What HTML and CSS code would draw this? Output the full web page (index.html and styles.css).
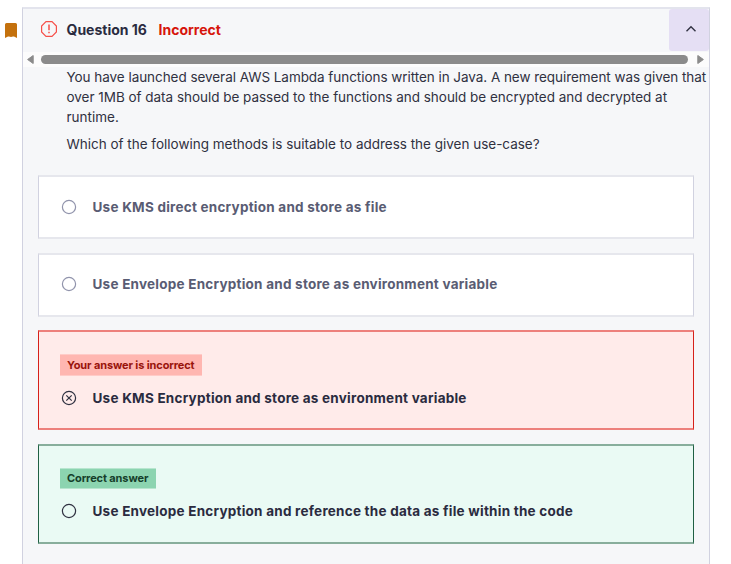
FILE: index.html
```html
<!DOCTYPE html>
<html lang="en">
<head>
<meta charset="utf-8">
<title>Question 16</title>
<link rel="stylesheet" href="styles.css">
</head>
<body>
<main class="page">
  <svg class="bookmark" width="12" height="15" viewBox="0 0 12 15"><path d="M1.5 0h9Q12 0 12 1.5V15L9 13.6H8L6 14 4 13.6H3L0 15V1.5Q0 0 1.5 0Z" fill="#c4710d"/></svg>
  <section class="panel">
    <header class="header">
      <svg class="alert" width="16" height="16" viewBox="0 0 16 16" fill="none" stroke="#f6504a" stroke-width="1.2"><path d="M5 .6h6L15.4 5v6L11 15.4H5L.6 11V5Z"/><path d="M8 3.5v5.8M8 10.8v1.5" stroke-width="1.5"/></svg>
      <h1 class="title">Question 16</h1>
      <span class="status">Incorrect</span>
      <button class="toggle" aria-label="Collapse"><svg width="12" height="8" viewBox="0 0 12 8" fill="none" stroke="#303141" stroke-width="1.4"><path d="M1.5 6.3 6 1.8l4.5 4.5"/></svg></button>
    </header>
    <div class="scrollbar">
      <svg width="7" height="9" viewBox="0 0 7 9"><path d="M6.2.5v8L.6 4.5Z" fill="#8b8b8b" stroke="#8b8b8b" stroke-linejoin="round"/></svg>
      <div class="thumb"></div>
      <svg width="7" height="9" viewBox="0 0 7 9"><path d="M.8.5v8l5.6-4Z" fill="#8b8b8b" stroke="#8b8b8b" stroke-linejoin="round"/></svg>
    </div>
    <div class="prompt">
      <p><span class="l1">You have launched several AWS Lambda functions written in Java. A new requirement was given that</span><br><span class="l2">over 1MB of data should be passed to the functions and should be encrypted and decrypted at</span><br>runtime.</p>
      <p><span class="l4">Which of the following methods is suitable to address the given use-case?</span></p>
    </div>
    <div class="answers">
      <div class="answer">
        <div class="choice"><svg class="radio" width="16" height="16" viewBox="0 0 16 16"><circle cx="8" cy="8" r="6.6"/></svg><span>Use KMS direct encryption and store as file</span></div>
      </div>
      <div class="answer second">
        <div class="choice"><svg class="radio" width="16" height="16" viewBox="0 0 16 16"><circle cx="8" cy="8" r="6.6"/></svg><span>Use Envelope Encryption and store as environment variable</span></div>
      </div>
      <div class="answer wrong">
        <div class="badge">Your answer is incorrect</div>
        <div class="choice"><svg class="radio" width="16" height="16" viewBox="0 0 16 16"><circle cx="8" cy="8" r="6.6"/><path d="m5.3 5.3 5.4 5.4m0-5.4-5.4 5.4"/></svg><span>Use KMS Encryption and store as environment variable</span></div>
      </div>
      <div class="answer right">
        <div class="badge">Correct answer</div>
        <div class="choice"><svg class="radio" width="16" height="16" viewBox="0 0 16 16"><circle cx="8" cy="8" r="6.6"/></svg><span>Use Envelope Encryption and reference the data as file within the code</span></div>
      </div>
    </div>
  </section>
</main>
</body>
</html>
```
FILE: styles.css
```css
* { box-sizing: border-box; }
body { margin: 0; background: #fff; color: #303141; font-family: Inter, "Liberation Sans", sans-serif; font-size: 13.5px; }
svg { display: block; flex: none; }
.page { display: flex; height: 564px; padding: 7px 0 0 5px; overflow: hidden; white-space: nowrap; }
.bookmark { margin-top: 16px; }
.panel { width: 688px; margin-left: 5px; background: #f6f7f9; border: 1px solid #d1d2e0; border-top: 2px solid #e3e4ed; border-bottom: 0; }
.header { display: flex; align-items: center; height: 43px; padding-left: 18px; }
.alert { margin-bottom: 3px; }
.title { margin: 0 0 2px 9.5px; width: 92px; font-size: 14px; line-height: 20px; font-weight: 700; color: #2a2b3f; }
.status { margin-bottom: 2px; font-weight: 700; font-size: 14px; line-height: 20px; color: #d6150c; }
.toggle { display: flex; align-items: center; justify-content: center; width: 40px; height: 42px; margin: 0 0 1px auto; padding: 0 0 2px 4px; border: 0; border-radius: 3px; background: #e5dff4; }
.scrollbar { display: flex; align-items: center; height: 15px; padding: 0 4px; background: #fcfcfc; gap: 7px; }
.thumb { width: 647px; height: 9px; border-radius: 5px; background: #8b8b8b; }
.scrollbar svg:last-child { margin-left: 2px; }
.prompt { height: 108px; padding-left: 43.5px; font-size: 13.5px; line-height: 20px; }
.prompt p { margin: 0 0 7px; }
.l1 { letter-spacing: -.05px; }
.l2 { letter-spacing: -.025px; }
.l4 { letter-spacing: -.01px; }
.answers { padding: 0 15px; }
.answer { height: 64px; margin-bottom: 14px; padding: 21px 21px 0; background: #fff; border: 1px solid #d1d2e0; border-top: 2px solid #e6e7ed; border-bottom: 2px solid #e6e7ed; color: #595c73; }
.second { margin-bottom: 13px; padding-top: 20px; }
.choice { display: flex; align-items: center; height: 18px; padding-left: 1px; gap: 15.5px; font-size: 13.5px; font-weight: 700; letter-spacing: .237px; }
.radio { fill: none; stroke: #9194ac; stroke-width: 1.2; }
.wrong, .right { height: 100px; padding-top: 22px; color: #2a2b3f; }
.wrong .radio, .right .radio { stroke: #303141; }
.wrong { background: #ffebea; border-color: #ed807c #d6211a #ed807c #d6211a; }
.right { background: #eafaf4; border-color: #88ae9c #206044 #88ae9c #206044; }
.badge { width: 142px; height: 22px; margin-bottom: 13px; padding-left: 7px; background: #ffb6b1; border-top: 1px solid #ffcbc8; border-bottom: 1px solid #ffcbc8; color: #99140c; font-size: 11px; font-weight: 700; line-height: 20px; letter-spacing: -.12px; }
.right .badge { width: 96px; height: 21px; line-height: 18px; background: #8cd4b0; border-color: #b8e6cf; color: #153e2a; }
```
